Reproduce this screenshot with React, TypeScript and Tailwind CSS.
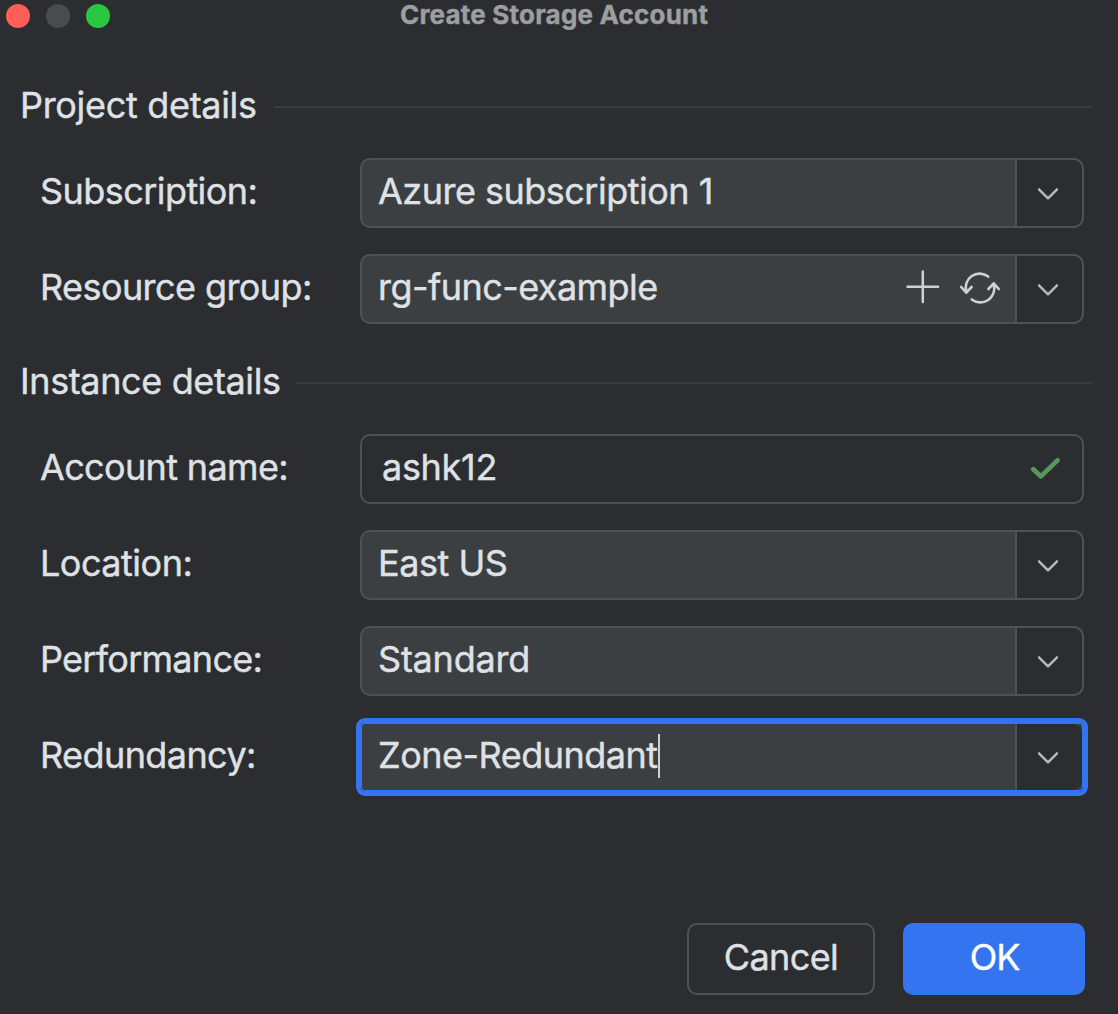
import React from 'react';

function SectionHeader({ title, tracking, line }: { title: string; tracking: string; line: string }) {
  return (
    <div className="flex h-[40px] items-start pl-[20px] pr-[26px]">
      <h2 className={`whitespace-nowrap text-[36px] leading-[40px] ${tracking}`}>{title}</h2>
      <div className={`mt-[21px] h-[2px] shrink-0 ml-auto bg-[#393b40] ${line}`} />
    </div>
  );
}

function Row({ label, tracking, children }: { label: string; tracking: string; children: React.ReactNode }) {
  return (
    <div className="flex h-[70px] items-start">
      <label className={`w-[320px] whitespace-nowrap text-[36px] leading-[66px] ${tracking}`}>{label}</label>
      {children}
    </div>
  );
}

function Chevron() {
  return (
    <svg width="24" height="16" viewBox="0 0 24 16" fill="none" stroke="#b4b8bf" strokeWidth="2.4" strokeLinecap="round" strokeLinejoin="round">
      <path d="M3 3.3 L12 12.3 L21 3.3" />
    </svg>
  );
}

function PlusIcon() {
  return (
    <svg width="36" height="36" viewBox="0 0 36 36" fill="none" stroke="#ced0d6" strokeWidth="2.5" strokeLinecap="round">
      <path d="M17.8 1.5 V32.1 M2.5 16.8 H33.1" />
    </svg>
  );
}

function RefreshIcon() {
  return (
    <svg width="44" height="36" viewBox="0 0 44 36" fill="none" stroke="#ced0d6" strokeWidth="2.6" strokeLinecap="round" strokeLinejoin="round">
      <path d="M30.2 6.6 A13.9 13.9 0 0 0 8.3 21.5 M3.2 17 L8.3 22.7 L13.6 17" />
      <path d="M13.8 29.4 A13.9 13.9 0 0 0 35.7 14.5 M30.4 19 L35.7 13.3 L40.8 19" />
    </svg>
  );
}

function Combo({ value, tracking, focused, children }: { value: string; tracking: string; focused?: boolean; children?: React.ReactNode }) {
  return (
    <div
      className={`flex h-[70px] w-[724px] shrink-0 overflow-hidden border-2 bg-[#3c3f41] ${
        focused ? 'rounded-[5px] border-[#3574f0] outline-4 outline-[#3574f0]' : 'rounded-[10px] border-[#4e5157]'
      }`}
    >
      <div className="flex flex-1 items-start pl-[16px]">
        <span className={`whitespace-nowrap text-[36px] leading-[62px] ${tracking}`}>{value}</span>
        {focused && <span className="mt-[10px] h-[44px] w-[2px] bg-[#ced0d6]" />}
        {children}
      </div>
      <div className="flex w-[67px] items-center justify-center rounded-r-[9px] border-l-2 border-[#4e5157] bg-[#2b2d30] pb-px pr-[3px] pt-[3px]">
        <Chevron />
      </div>
    </div>
  );
}

export default function App() {
  return (
    <div className="flex h-[1014px] w-[1118px] flex-col overflow-hidden border-b border-[#2f262d] bg-[#2b2d30] font-['Inter',sans-serif] text-[#dfe1e5] [-webkit-text-stroke-width:0.4px]">
      <header className="flex h-[32px] shrink-0 items-start">
        <div className="flex gap-[16px] pl-[6px] pt-[4px]">
          <span className="size-[24px] rounded-full bg-[#ff5f57]" />
          <span className="size-[24px] rounded-full bg-[#4a4b4d]" />
          <span className="size-[24px] rounded-full bg-[#28c840]" />
        </div>
        <h1 className="ml-[290px] whitespace-nowrap text-[26px] font-bold leading-[30px] tracking-[0.2px] text-[#9d9ea0]">Create Storage Account</h1>
      </header>

      <section className="mt-[53px] shrink-0">
        <SectionHeader title="Project details" tracking="tracking-[-0.31px]" line="w-[818px]" />
        <div className="mt-[33px] flex flex-col gap-[26px] pl-[40px]">
          <Row label="Subscription:" tracking="tracking-[-0.56px]">
            <Combo value="Azure subscription 1" tracking="tracking-[-0.51px]" />
          </Row>
          <Row label="Resource group:" tracking="tracking-[-0.58px]">
            <Combo value="rg-func-example" tracking="tracking-[-0.55px]">
              <div className="ml-auto flex gap-[17px] pr-[13px] pt-[14px]">
                <PlusIcon />
                <RefreshIcon />
              </div>
            </Combo>
          </Row>
        </div>
      </section>

      <section className="mt-[37px] shrink-0">
        <SectionHeader title="Instance details" tracking="tracking-[-0.38px]" line="w-[796px]" />
        <div className="mt-[33px] flex flex-col gap-[26px] pl-[40px]">
          <Row label="Account name:" tracking="tracking-[-0.65px]">
            <div className="flex h-[70px] w-[724px] shrink-0 items-start justify-between rounded-[10px] border-2 border-[#4e5157] pl-[20px] pr-[20px]">
              <span className="text-[36px] leading-[62px] tracking-[-0.3px]">ashk12</span>
              <svg className="mt-[20px]" width="32" height="24" viewBox="0 0 32 24" fill="none" stroke="#57965c" strokeWidth="4.8" strokeLinecap="round" strokeLinejoin="round">
                <path d="M3.3 13.2 L11 20.4 L27.4 4.4" />
              </svg>
            </div>
          </Row>
          <Row label="Location:" tracking="tracking-[-0.5px]">
            <Combo value="East US" tracking="tracking-[-0.45px]" />
          </Row>
          <Row label="Performance:" tracking="tracking-[-0.72px]">
            <Combo value="Standard" tracking="tracking-[-0.22px]" />
          </Row>
          <Row label="Redundancy:" tracking="tracking-[-0.58px]">
            <Combo value="Zone-Redundant" tracking="tracking-[-0.5px]" focused />
          </Row>
        </div>
      </section>

      <footer className="mt-[131px] flex shrink-0 justify-end gap-[28px] pr-[33px]">
        <button className="flex h-[72px] w-[188px] justify-center rounded-[10px] border-2 border-[#4e5157] text-[36px] leading-[65px] tracking-[-0.6px]">Cancel</button>
        <button className="flex h-[72px] w-[182px] justify-center rounded-[10px] bg-[#3574f0] pl-px text-[36px] leading-[69px] tracking-[-1px] text-white">OK</button>
      </footer>
    </div>
  );
}
